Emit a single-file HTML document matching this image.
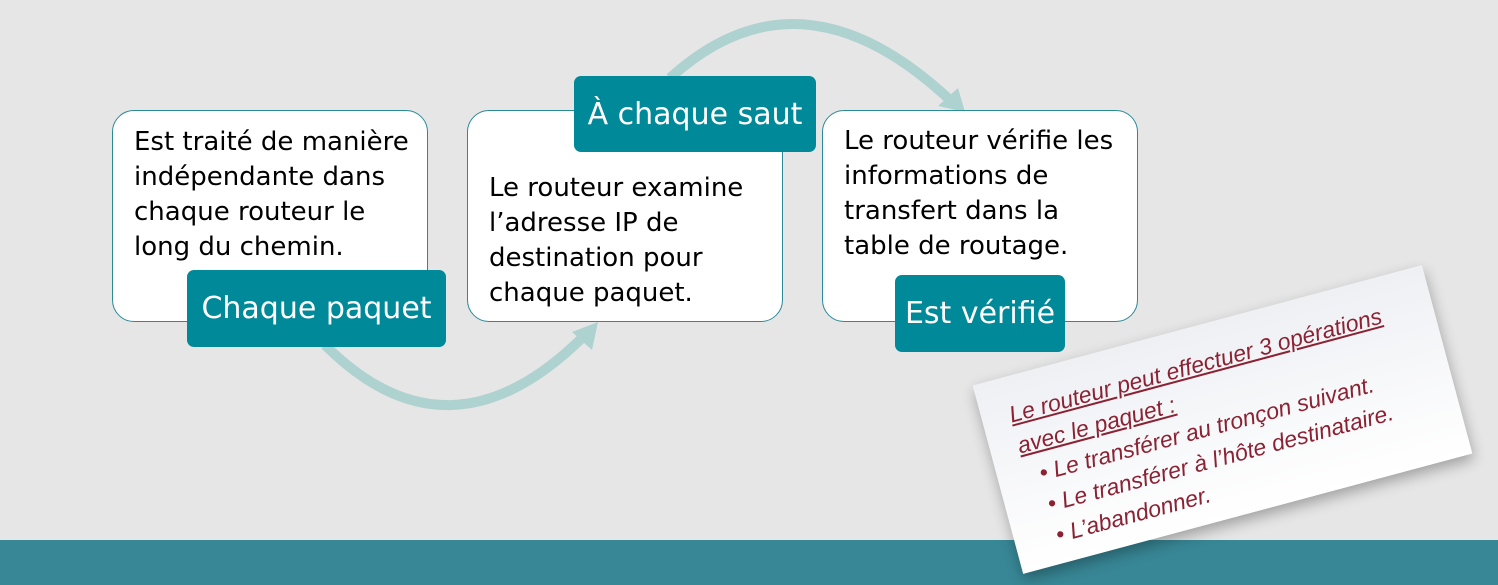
<!DOCTYPE html>
<html><head><meta charset="utf-8"><style>
body{margin:0;width:1498px;height:585px;background:#e6e6e6;position:relative;overflow:hidden;font-family:"DejaVu Sans","Liberation Sans",sans-serif}
.band{position:absolute;left:0;top:540px;width:1498px;height:45px;background:#388796}
.box{position:absolute;background:#fff;border:1.5px solid #2b8a98;border-radius:22px;box-sizing:border-box;font-size:26px;line-height:35px;color:#000;white-space:nowrap}
.lab{position:absolute;background:#008999;color:#fff;border-radius:7px;font-size:30px;display:flex;align-items:center;justify-content:center}
.note{position:absolute;left:990px;top:322px;width:465px;height:195px;background:linear-gradient(#eef0f4,#fff);transform:rotate(-15deg);transform-origin:center;box-shadow:0 6px 14px rgba(0,0,0,.3);color:#8b2233;font-family:"Liberation Sans",sans-serif;font-style:italic;font-size:23px;line-height:32px;padding:22px 0 0 28px;box-sizing:border-box}
.note div{padding-left:14px}
</style></head><body>
<svg style="position:absolute;left:0;top:0" width="1498" height="585">
<path d="M325 345 Q450 470 585 335" fill="none" stroke="#aed2d0" stroke-width="10"/>
<polygon points="598,322 572,332 592,350" fill="#aed2d0"/>
<path d="M670 78 Q800 -40 950 100" fill="none" stroke="#aed2d0" stroke-width="10"/>
<polygon points="965,112 938,106 958,88" fill="#aed2d0"/>
</svg>
<div class="box" style="left:112px;top:110px;width:316px;height:212px;padding:14px 0 0 21px">Est traité de manière<br>indépendante dans<br>chaque routeur le<br>long du chemin.</div>
<div class="box" style="left:467px;top:110px;width:316px;height:212px;padding:60px 0 0 21px">Le routeur examine<br>l’adresse IP de<br>destination pour<br>chaque paquet.</div>
<div class="box" style="left:822px;top:110px;width:316px;height:212px;padding:13px 0 0 21px">Le routeur vérifie les<br>informations de<br>transfert dans la<br>table de routage.</div>
<div class="lab" style="left:187px;top:270px;width:259px;height:77px">Chaque paquet</div>
<div class="lab" style="left:574px;top:76px;width:242px;height:76px">À chaque saut</div>
<div class="lab" style="left:895px;top:275px;width:170px;height:77px">Est vérifié</div>
<div class="band"></div>
<div class="note"><u>Le routeur peut effectuer 3 opérations<br>avec le paquet :</u><div>• Le transférer au tronçon suivant.<br>• Le transférer à l’hôte destinataire.<br>• L’abandonner.</div></div>
</body></html>
